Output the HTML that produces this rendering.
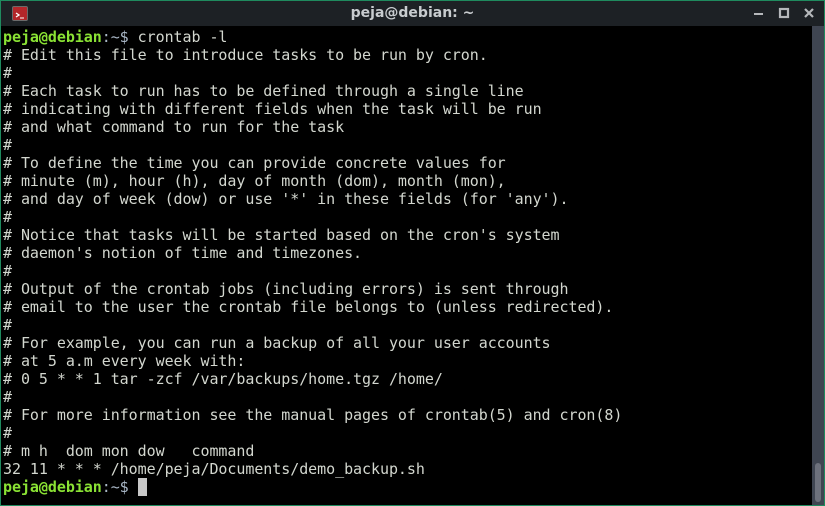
<!DOCTYPE html>
<html><head><style>
*{margin:0;padding:0;box-sizing:border-box}
body{width:825px;height:506px;background:#000;overflow:hidden;position:relative;font-family:"DejaVu Sans Mono",monospace}
#win{position:absolute;left:0;top:0;width:825px;height:506px;border:1px solid #1f8a5e;background:#000}
#tb{position:absolute;left:0;top:0;width:823px;height:25px;background:#1d2125}
#title{position:absolute;left:0;right:0;top:4px;text-align:center;color:#c8cccf;font:bold 14px "DejaVu Sans",sans-serif}
#icon{position:absolute;left:11px;top:5px;width:16px;height:15px;background:#b3262a;border:1px solid #6a6a6a;border-radius:2px}
#term{position:absolute;left:2px;top:27px;color:#d3d7cf;font-size:15px;line-height:18px;white-space:pre;letter-spacing:-0.055px}
.g{color:#8ae234;font-weight:bold}.b{color:#a9b7c6}
#sb{position:absolute;left:811px;top:25px;width:12px;height:479px;background:#3f4551}
#thumb{position:absolute;left:814px;top:462px;width:6px;height:39px;background:#6d717c;border-radius:3px}
</style></head><body><div id="win">
<div id="tb"><div id="icon"><svg width="14" height="13"><path d="M3 4l3 2-3 2" stroke="#fff" fill="none" stroke-width="1.3"/><path d="M7 9h4" stroke="#fff"/></svg></div>
<div id="title">peja@debian: ~</div>
<svg style="position:absolute;left:750px;top:6px" width="70" height="14"><rect x="3" y="6" width="9" height="2" fill="#b5b8bb"/><rect x="29" y="2" width="8" height="8" fill="none" stroke="#b5b8bb" stroke-width="2.2"/><path d="M54 2l8 8M62 2l-8 8" stroke="#b5b8bb" stroke-width="2.2"/></svg></div>
<div id="term"><span class="g">peja@debian</span><span class="b">:~$</span> crontab -l
# Edit this file to introduce tasks to be run by cron.
#
# Each task to run has to be defined through a single line
# indicating with different fields when the task will be run
# and what command to run for the task
#
# To define the time you can provide concrete values for
# minute (m), hour (h), day of month (dom), month (mon),
# and day of week (dow) or use '*' in these fields (for 'any').
#
# Notice that tasks will be started based on the cron's system
# daemon's notion of time and timezones.
#
# Output of the crontab jobs (including errors) is sent through
# email to the user the crontab file belongs to (unless redirected).
#
# For example, you can run a backup of all your user accounts
# at 5 a.m every week with:
# 0 5 * * 1 tar -zcf /var/backups/home.tgz /home/
#
# For more information see the manual pages of crontab(5) and cron(8)
#
# m h  dom mon dow   command
32 11 * * * /home/peja/Documents/demo_backup.sh
<span class="g">peja@debian</span><span class="b">:~$</span> <span style="background:#c8c8c8"> </span></div>
<div id="sb"></div>
<div id="thumb"></div>
</div></body></html>
